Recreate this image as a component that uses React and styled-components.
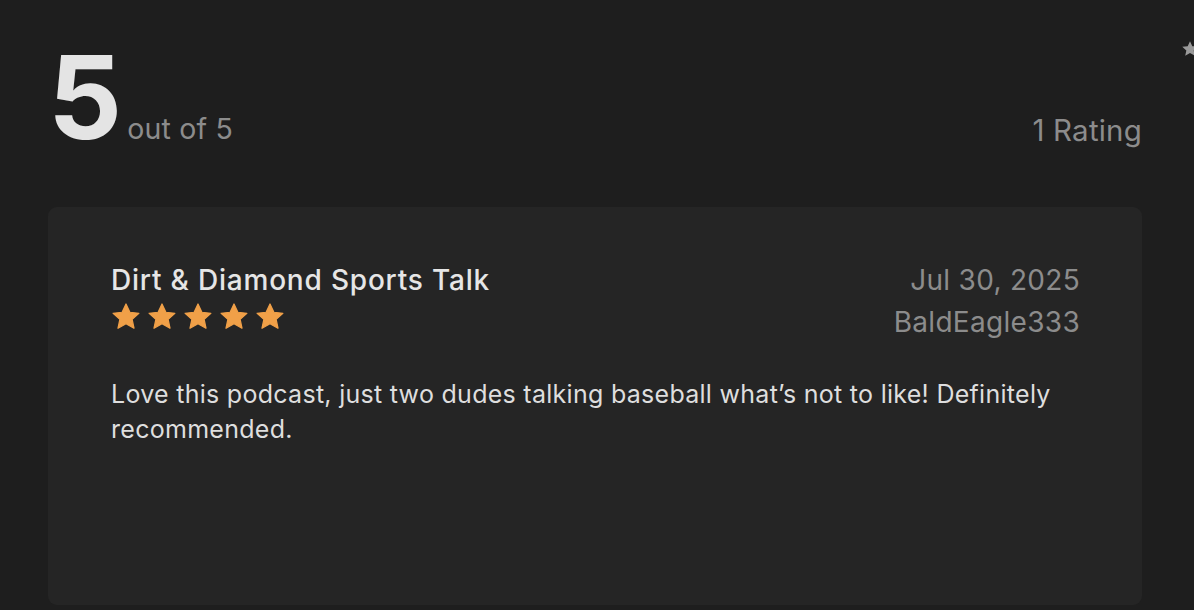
import React from "react";
import styled, { createGlobalStyle } from "styled-components";

const Global = createGlobalStyle`
  html, body {
    margin: 0;
    padding: 0;
    background: #1e1e1e;
    font-family: Inter, "Noto Sans", "Liberation Sans", sans-serif;
    -webkit-font-smoothing: antialiased;
  }
  #root { min-height: 610px; }
`;

const Page = styled.div`
  position: relative;
  width: 1194px;
  height: 610px;
  overflow: hidden;
  box-sizing: border-box;
  padding: 39px 52px 0 48px;
  background: #1e1e1e;
`;

const Header = styled.div`
  display: flex;
  align-items: baseline;
  justify-content: space-between;
  height: 168px;
`;

const Score = styled.div`
  display: flex;
  align-items: baseline;
  gap: 8px;
`;

const Big = styled.span`
  font-size: 116px;
  line-height: 1;
  font-weight: 700;
  color: #e4e4e4;
  letter-spacing: -3px;
`;

const Muted = styled.span`
  font-size: ${(p) => p.$size || 28}px;
  color: #8c8c8c;
  font-weight: 400;
  letter-spacing: 0.2px;
  position: relative;
  top: ${(p) => p.$drop || 0}px;
`;

const CornerStar = styled.svg`
  position: absolute;
  top: 40px;
  left: 1181px;
  width: 18px;
  height: 18px;
`;

const Card = styled.section`
  box-sizing: border-box;
  height: 398px;
  background: #252525;
  border-radius: 9px;
  padding: 56px 62px 0 63px;
`;

const CardTop = styled.div`
  display: flex;
  justify-content: space-between;
  align-items: flex-start;
`;

const Col = styled.div`
  display: flex;
  flex-direction: column;
  align-items: ${(p) => (p.$right ? "flex-end" : "flex-start")};
`;

const Title = styled.div`
  font-size: 28px;
  line-height: 34px;
  font-weight: 500;
  color: #e6e6e6;
  letter-spacing: 0.8px;
`;

const Meta = styled.div`
  font-size: 28px;
  line-height: 34px;
  color: #8c8c8c;
  letter-spacing: 0.3px;
  & + & { margin-top: 8px; }
`;

const Stars = styled.div`
  display: flex;
  gap: 6px;
  margin-top: 5px;
`;

const Body = styled.p`
  margin: 38px 0 0;
  font-size: 25px;
  line-height: 35px;
  color: #dedede;
  letter-spacing: 0.28px;
  max-width: 969px;
`;

const StarPath = "M12 1.6l3.1 6.6 7.2.8-5.4 4.9 1.5 7.1L12 17.4 5.6 21l1.5-7.1L1.7 9l7.2-.8z";

function Star({ color = "#f0a048", size = 30 }) {
  return (
    <svg width={size} height={size} viewBox="0 0 24 24">
      <path d={StarPath} fill={color} stroke={color} strokeWidth="1" strokeLinejoin="round" />
    </svg>
  );
}

export default function App() {
  return (
    <>
      <Global />
      <Page>
        <CornerStar viewBox="0 0 24 24">
          <path d={StarPath} fill="#9a9a9a" />
        </CornerStar>
        <Header>
          <Score>
            <Big>5</Big>
            <Muted $size={28.5}>out of 5</Muted>
          </Score>
          <Muted $size={29.5} $drop={2}>1 Rating</Muted>
        </Header>
        <Card>
          <CardTop>
            <Col>
              <Title>Dirt &amp; Diamond Sports Talk</Title>
              <Stars>
                {[0, 1, 2, 3, 4].map((i) => (
                  <Star key={i} />
                ))}
              </Stars>
            </Col>
            <Col $right>
              <Meta>Jul 30, 2025</Meta>
              <Meta>BaldEagle333</Meta>
            </Col>
          </CardTop>
          <Body>
            Love this podcast, just two dudes talking baseball what’s not to like! Definitely recommended.
          </Body>
        </Card>
      </Page>
    </>
  );
}
